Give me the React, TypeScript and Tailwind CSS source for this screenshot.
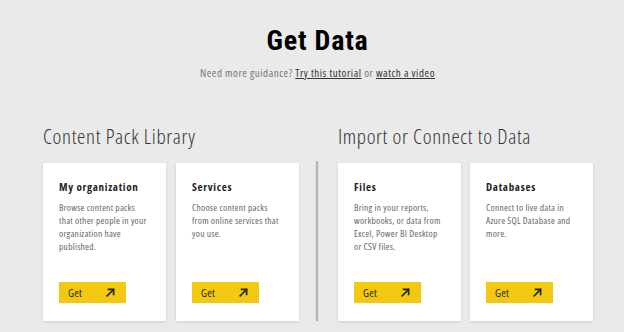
import React from "react";

function Arrow() {
  return (
    <svg width="9" height="9" viewBox="0 0 9 9" fill="none" stroke="#222" strokeWidth="1.7" strokeLinecap="square">
      <path d="M1.2 7.8 L7.4 1.6" />
      <path d="M2.6 1.4 H7.6 V6.4" />
    </svg>
  );
}

function Card({ title, lines }: { title: string; lines: string[] }) {
  return (
    <div className="flex h-[158px] w-[123px] flex-col bg-white pb-[18px] pl-[16px] pt-[16px] shadow-[0_1px_3px_rgba(0,0,0,0.13)]">
      <div className="text-[11px] font-bold leading-[15px] tracking-[0.7px] text-[#252423] [font-stretch:75%]">{title}</div>
      <div className="mt-[7px] text-[9.5px] leading-[13px] tracking-[0.25px] text-[#666] [font-stretch:75%]">
        {lines.map((l, i) => (
          <div key={i} className="whitespace-nowrap">
            {l}
          </div>
        ))}
      </div>
      <div className="mt-auto flex h-[21px] w-[67px] items-center justify-between bg-[#f2c811] pl-[9px] pr-[11px]">
        <span className="text-[11px] leading-[12px] tracking-[0.3px] text-[#252423] [font-stretch:75%]">Get</span>
        <Arrow />
      </div>
    </div>
  );
}

export default function App() {
  return (
    <div className="h-[332px] w-[624px] overflow-hidden bg-[#eaeaea] font-['Open_Sans',sans-serif]">
      <div className="pl-[11px]">
        <div className="pt-[26px] text-center font-['Roboto',sans-serif] text-[28px] font-bold leading-[30px] tracking-[0.8px] text-black [font-stretch:75%]">
          Get Data
        </div>
        <div className="mt-[10px] text-center text-[11px] leading-[14px] tracking-[0.55px] text-[#767676] [font-stretch:75%]">
          Need more guidance? <span className="text-[#333] underline">Try this tutorial</span> or{" "}
          <span className="text-[#333] underline">watch a video</span>
        </div>
      </div>
      <div className="mt-[44px] flex pl-[43px]">
        <div className="flex flex-col">
          <div className="text-[21px] font-light leading-[24px] tracking-[0.65px] text-[#333] [font-stretch:75%]">Content Pack Library</div>
          <div className="mt-[15px] flex gap-[10px]">
            <Card title="My organization" lines={["Browse content packs", "that other people in your", "organization have", "published."]} />
            <Card title="Services" lines={["Choose content packs", "from online services that", "you use."]} />
          </div>
        </div>
        <div className="ml-[16px] mr-[19px] mt-[37px] flex h-[160px] w-[4px] justify-center bg-[#e0e0e0]">
          <div className="h-full w-[2px] bg-[#b5b5b5]" />
        </div>
        <div className="flex flex-col">
          <div className="text-[21px] font-light leading-[24px] tracking-[0.65px] text-[#333] [font-stretch:75%]">Import or Connect to Data</div>
          <div className="mt-[15px] flex gap-[9px]">
            <Card title="Files" lines={["Bring in your reports,", "workbooks, or data from", "Excel, Power BI Desktop", "or CSV files."]} />
            <Card title="Databases" lines={["Connect to live data in", "Azure SQL Database and", "more."]} />
          </div>
        </div>
      </div>
    </div>
  );
}
